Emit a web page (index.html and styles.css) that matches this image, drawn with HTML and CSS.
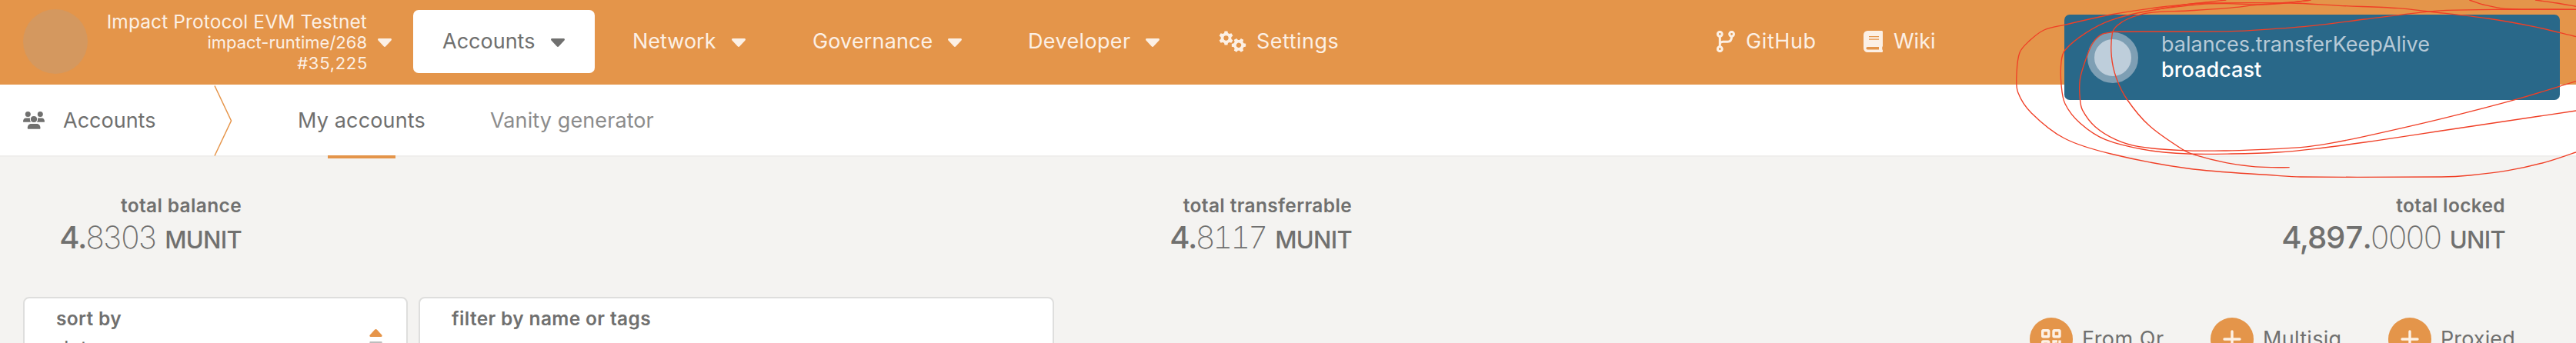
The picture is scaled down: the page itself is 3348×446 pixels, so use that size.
FILE: index.html
```html
<!DOCTYPE html>
<html lang="en">
<head>
<meta charset="utf-8">
<title>Accounts</title>
<link rel="stylesheet" href="styles.css">
</head>
<body>
<svg class="defs" width="0" height="0">
  <symbol id="caret" viewBox="0 0 18 11"><path d="M1.600 0h14.800c1.500 0 2 1.500 1.100 2.500l-7.200 7.800c-.8.9-1.800.9-2.600 0L.5 2.500C-.4 1.500.1 0 1.600 0z"/></symbol>
  <symbol id="gear" viewBox="-10 -10 20 20">
    <path fill-rule="evenodd" d="M-2-9.600h4l.6 2.800 1.900 1.100 2.800-.9 2 3.400L7.200-1.200v2.400l2.100 2-2 3.400-2.800-.9-1.900 1.100L2 9.600h-4l-.6-2.800-1.900-1.100-2.800.9-2-3.400 2.100-2v-2.400l-2.100-2 2-3.400 2.800.9 1.900-1.100zM0-3.300a3.300 3.300 0 1 0 0 6.600 3.300 3.300 0 0 0 0-6.600z"/>
  </symbol>
</svg>

<header class="topbar">
  <div class="chain">
    <span class="chain-logo"></span>
    <div class="chain-info">
      <div class="chain-name">Impact Protocol EVM Testnet</div>
      <div class="chain-line">impact-runtime/268</div>
      <div class="chain-line chain-block">#35,225</div>
    </div>
    <svg class="caret"><use href="#caret"/></svg>
  </div>
  <nav class="menu">
    <a class="menu-item accounts active"><span>Accounts</span><svg class="caret"><use href="#caret"/></svg></a>
    <a class="menu-item network"><span>Network</span><svg class="caret"><use href="#caret"/></svg></a>
    <a class="menu-item governance"><span>Governance</span><svg class="caret"><use href="#caret"/></svg></a>
    <a class="menu-item developer"><span>Developer</span><svg class="caret"><use href="#caret"/></svg></a>
    <a class="menu-item settings">
      <svg class="gears" viewBox="0 0 36 28"><use href="#gear" x="0" y="0" width="19" height="19"/><use href="#gear" width="19" height="19" transform="translate(26 18.800) rotate(30) translate(-9.500 -9.500)"/></svg>
      <span>Settings</span>
    </a>
  </nav>
  <nav class="links">
    <a class="menu-item github">
      <svg class="branch" viewBox="0 0 24 28" fill="none" stroke="currentColor" stroke-width="3"><circle cx="4.300" cy="4.300" r="2.900"/><circle cx="19.600" cy="4.300" r="2.900"/><circle cx="4.300" cy="23.700" r="2.900"/><path d="M4.300 7v14M4.300 18c0-2 1.200-3.800 4-3.800h6c3.500 0 5.300-2 5.300-6.700"/></svg>
      <span>GitHub</span>
    </a>
    <a class="menu-item wiki">
      <svg class="book" viewBox="0 0 25 28"><path fill-rule="evenodd" d="M5.200 0h18.400c.8 0 1.400.6 1.400 1.300v18.400c0 .5-.2.900-.6 1.100-.3 1.200-.3 2.500 0 3.700.4.300.6.600.6 1v1.200c0 .8-.6 1.300-1.400 1.300H5.200A5.200 5.200 0 0 1 0 22.800V5.200A5.200 5.200 0 0 1 5.200 0zM7 7v1.200h13V7zm0 3.600v1.200h13v-1.200zM5.200 21a1.800 1.800 0 0 0 0 3.600H20V21z"/></svg>
      <span>Wiki</span>
    </a>
  </nav>
</header>

<div class="tabs">
  <div class="tabs-title">
    <svg class="users" viewBox="0 0 28 23"><circle cx="6.300" cy="3.500" r="3.500"/><circle cx="22.300" cy="3.500" r="3.500"/><circle cx="14" cy="10" r="4.100"/><path d="M3.800 8.400h4.300l1 .3c-.5 2 0 3.700 1.100 5H.6c-.4 0-.6-.3-.6-.7 0-2.800 1.400-4.600 3.800-4.600zM24.200 8.400h-4.300l-1 .3c.5 2 0 3.700-1.100 5h9.600c.4 0 .6-.3.6-.7 0-2.800-1.400-4.600-3.800-4.600zM10.600 16h7c3 0 4.900 2.200 4.900 5.500 0 .8-.4 1.300-1.200 1.300H7c-.8 0-1.200-.5-1.200-1.300 0-3.300 1.900-5.500 4.800-5.500z"/></svg>
    <span>Accounts</span>
  </div>
  <svg class="chevron" viewBox="0 0 24 93" fill="none" stroke="#e6954a" stroke-width="1.500"><path d="M1 1.500L22.500 47 1 92.500"/></svg>
  <a class="tab tab-active">My accounts</a>
  <a class="tab tab-vanity">Vanity generator</a>
</div>

<main>
  <section class="summary">
    <div class="sum sum-balance">
      <div class="label">total balance</div>
      <div class="value"><span class="int">4.</span><span class="frac">8303</span><span class="unit">MUNIT</span></div>
    </div>
    <div class="sum sum-transfer">
      <div class="label">total transferrable</div>
      <div class="value"><span class="int">4.</span><span class="frac">8117</span><span class="unit">MUNIT</span></div>
    </div>
    <div class="sum sum-locked">
      <div class="label">total locked</div>
      <div class="value"><span class="int">4,897.</span><span class="frac">0000</span><span class="unit">UNIT</span></div>
    </div>
  </section>
  <section class="filters">
    <div class="card sort">
      <div>
        <div class="label">sort by</div>
        <div class="sort-value">date</div>
      </div>
      <svg class="sorter" viewBox="0 0 17 27"><path fill="#e6954a" d="M7.200.6c.7-.8 1.900-.8 2.600 0l6.400 7c.8 1 .5 2.400-.8 2.400H1.600C.3 10 0 8.600.8 7.600z"/><path fill="#bdbdbd" d="M1.600 16h13.800c1.300 0 1.600 1.400.8 2.400l-6.400 7c-.7.8-1.900.8-2.600 0l-6.400-7C0 17.400.3 16 1.600 16z"/></svg>
    </div>
    <div class="card filter">
      <div class="label">filter by name or tags</div>
    </div>
    <div class="actions">
      <button class="action qr">
        <span class="disc"><svg width="26" height="26" viewBox="0 0 26 26" fill="none" stroke="#fdf1e5" stroke-width="3.400"><rect x="1.700" y="1.700" width="8" height="8" rx="1"/><rect x="16" y="1.700" width="8" height="8" rx="1"/><rect x="1.700" y="16" width="8" height="8" rx="1"/><path d="M16 14.500v11M14.500 16h6.500M24 14.500V20M20 24.500h5.500"/></svg></span>
        <span>From Qr</span>
      </button>
      <button class="action multisig">
        <span class="disc"><svg width="24" height="24" viewBox="0 0 24 24"><path d="M12 2v20M2 12h20" stroke="#fdf1e5" stroke-width="3.400" stroke-linecap="round"/></svg></span>
        <span>Multisig</span>
      </button>
      <button class="action proxied">
        <span class="disc"><svg width="24" height="24" viewBox="0 0 24 24"><path d="M12 2v20M2 12h20" stroke="#fdf1e5" stroke-width="3.400" stroke-linecap="round"/></svg></span>
        <span>Proxied</span>
      </button>
    </div>
  </section>
</main>

<div class="toast">
  <span class="spinner"></span>
  <div class="toast-text">
    <div class="toast-method">balances.transferKeepAlive</div>
    <div class="toast-status">broadcast</div>
  </div>
</div>

<svg class="scribble" viewBox="0 0 2364 720"></svg>
<script src="scribble.js"></script>
</body>
</html>
```
FILE: styles.css
```css
* { box-sizing: border-box; }
body {
  margin: 0;
  height: 446px;
  overflow: hidden;
  position: relative;
  font: 27px/34px Inter, sans-serif;
  color: #70706f;
  background: #f4f3f1;
}
svg { display: block; fill: currentColor; flex: none; }
svg[fill="none"] { fill: none; }
.defs { position: absolute; }

.topbar { display: flex; height: 110px; background: #e4954a; color: #fcf0e5; }
.chain { display: flex; width: 537px; padding-left: 30px; }
.chain-logo { width: 84px; height: 84px; margin-top: 12px; border-radius: 50%; background: #d4985f; }
.chain-info { width: 363px; padding-top: 15px; text-align: right; }
.chain-name { font-size: 24.5px; line-height: 27px; letter-spacing: .1px; }
.chain-line { font-size: 22px; line-height: 26.500px; }
.chain-block { letter-spacing: .7px; margin-right: -1px; }
.chain .caret { margin: 50px 0 0 14px; }
.caret { width: 18px; height: 11px; }

.menu, .links { display: flex; padding-top: 13px; }
.links { margin-left: 412px; }
.menu-item { display: flex; align-items: center; height: 82px; white-space: nowrap; }
.menu-item .caret { margin: 3px 0 0 auto; }
.accounts { width: 236px; padding: 0 39px 0 38px; border-radius: 7px; }
.active { background: #fff; color: #70706f; }
.network { width: 147px; margin-left: 49px; }
.governance { width: 194px; margin-left: 87px; letter-spacing: .15px; }
.developer { width: 171px; margin-left: 86px; letter-spacing: .35px; }
.settings { width: 235px; margin-left: 77px; letter-spacing: .5px; }
.gears { width: 36px; height: 28px; margin-right: 13px; }
.github { width: 191px; letter-spacing: .6px; }
.branch { width: 24px; height: 28px; margin-right: 14px; }
.book { width: 25px; height: 28px; margin-right: 14px; overflow: hidden; }

.tabs { display: flex; height: 94px; background: #fff; border-bottom: 2px solid #efeeec; }
.tabs-title { display: flex; width: 278px; padding: 30px 0 0 30px; }
.users { width: 28px; height: 23px; margin: 5px 24px 0 0; }
.chevron { width: 24px; height: 93px; }
.tab { position: relative; padding-top: 30px; white-space: nowrap; }
.tab-active { width: 167px; margin-left: 85px; letter-spacing: .15px; }
.tab-active::after { content: ""; position: absolute; left: 39px; top: 92px; width: 88px; height: 4px; background: #e4954a; }
.tab-vanity { margin-left: 83px; color: #8c8c8c; letter-spacing: .1px; }

.summary { display: flex; justify-content: space-between; padding: 48px 92px 0 30px; height: 182px; }
.sum { display: flex; flex-direction: column; align-items: flex-end; }
.sum-balance, .sum-transfer { width: 284px; }
.sum-locked { width: 340px; }
.label { font-size: 24.500px; font-weight: 600; line-height: 30px; letter-spacing: .35px; white-space: nowrap; }
.value { display: flex; align-items: baseline; margin-top: 3px; line-height: 48px; font-size: 40px; font-variant-numeric: tabular-nums; white-space: nowrap; }
.int { font-weight: 500; letter-spacing: -1.700px; }
.frac { font-weight: 150; letter-spacing: -3px; }
.unit { margin-left: 12px; font-size: 31px; font-weight: 450; letter-spacing: -.7px; }

.filters { display: flex; height: 60px; overflow: hidden; }
.card { height: 120px; padding-top: 11px; background: #fff; border: 2px solid #dededd; border-radius: 8px; }
.sort { display: flex; justify-content: space-between; width: 500px; margin-left: 30px; padding-left: 41px; padding-right: 31px; }
.sort-value { margin-top: 8px; }
.sorter { width: 17px; height: 27px; margin-top: 29px; }
.filter { width: 826px; margin-left: 14px; padding-left: 41px; }
.actions { display: flex; margin-left: 1268px; padding-top: 27px; }
.action { display: flex; align-items: center; height: 56px; padding: 0; border: 0; background: none; font: inherit; color: inherit; text-align: left; white-space: nowrap; }
.action .disc { margin-right: 12px; }
.disc { display: flex; align-items: center; justify-content: center; width: 56px; height: 56px; border-radius: 50%; background: #e4954a; }
.qr { width: 235px; letter-spacing: .5px; }
.multisig { width: 231px; letter-spacing: .3px; }
.proxied { letter-spacing: .1px; }

.toast { position: absolute; left: 2683px; top: 19px; display: flex; width: 644px; height: 111px; border-radius: 7px; background: #296889; color: #fff; }
.spinner { width: 66px; height: 66px; margin: 23px 0 0 30px; border: 9px solid #7e9fb4; border-radius: 50%; background: #becedb; }
.toast-text { padding: 22px 0 0 30px; font-weight: 500; }
.toast-method { font-weight: 400; line-height: 33px; color: #b7cad7; }
.toast-status { line-height: 33px; }

.scribble { position: absolute; left: 2560px; top: 0; width: 788px; height: 240px; fill: none; stroke: #f03f26; stroke-width: 4; }
```
FILE: scribble.js
```js
// Freehand marker strokes, each smoothed through its points.
const strokes = [
  [[1000,0],[920,9],[750,27],[550,57],[370,97],[290,117],[232,160],[195,205],[183,290],[188,360],[240,440],[370,540],[550,600],[850,657],[1200,685],[1290,690],[1840,690],[1950,684],[2100,665],[2240,634],[2364,594]],
  [[1330,0],[1250,10],[1140,18],[1000,14],[900,17],[700,42],[550,79],[450,130],[372,195],[357,240],[357,330],[372,405],[430,480],[530,545],[700,587],[850,600],[1020,600],[1200,594],[1350,580],[1540,555],[1840,510],[2364,432]],
  [[720,38],[840,18],[920,12],[1250,12],[1440,22],[1670,32],[1790,45],[2020,72],[2200,104],[2364,143]],
  [[1330,0],[1250,9],[1140,17],[1000,32],[850,42],[700,50],[620,72],[575,100],[556,130],[553,220],[572,305],[615,390],[700,490],[830,583],[880,605],[1000,635],[1100,649],[1180,653],[1247,653]],
  [[560,125],[515,134],[480,168],[455,225],[430,310],[430,385],[440,430],[490,495],[570,545],[660,572],[830,587],[1000,588],[1140,583],[1290,575],[1400,560],[1540,532],[1840,463],[2140,385],[2364,317]],
  [[550,124],[700,123],[1020,122],[1140,116],[1340,100],[1540,75],[1780,46],[1860,40],[2040,37],[2364,37]],
  [[1948,0],[2010,20],[2090,34],[2364,37]],
  [[2205,0],[2290,12],[2364,25]]
];
const smooth = (p) => {
  let d = `M${p[0]}`;
  for (let i = 0; i < p.length - 1; i++) {
    const a = p[i - 1] || p[i], b = p[i], c = p[i + 1], e = p[i + 2] || c;
    const len = Math.hypot(c[0] - b[0], c[1] - b[1]) / 3;
    const tangent = (u, v) => {
      const l = Math.hypot(v[0] - u[0], v[1] - u[1]) || 1;
      return [(v[0] - u[0]) / l * len, (v[1] - u[1]) / l * len];
    };
    const s = tangent(a, c), t = tangent(b, e);
    d += `C${b[0] + s[0]},${b[1] + s[1]} ${c[0] - t[0]},${c[1] - t[1]} ${c}`;
  }
  return d;
};
const svg = document.querySelector('.scribble');
for (const points of strokes) {
  const path = document.createElementNS('http://www.w3.org/2000/svg', 'path');
  path.setAttribute('d', smooth(points));
  svg.append(path);
}
```
